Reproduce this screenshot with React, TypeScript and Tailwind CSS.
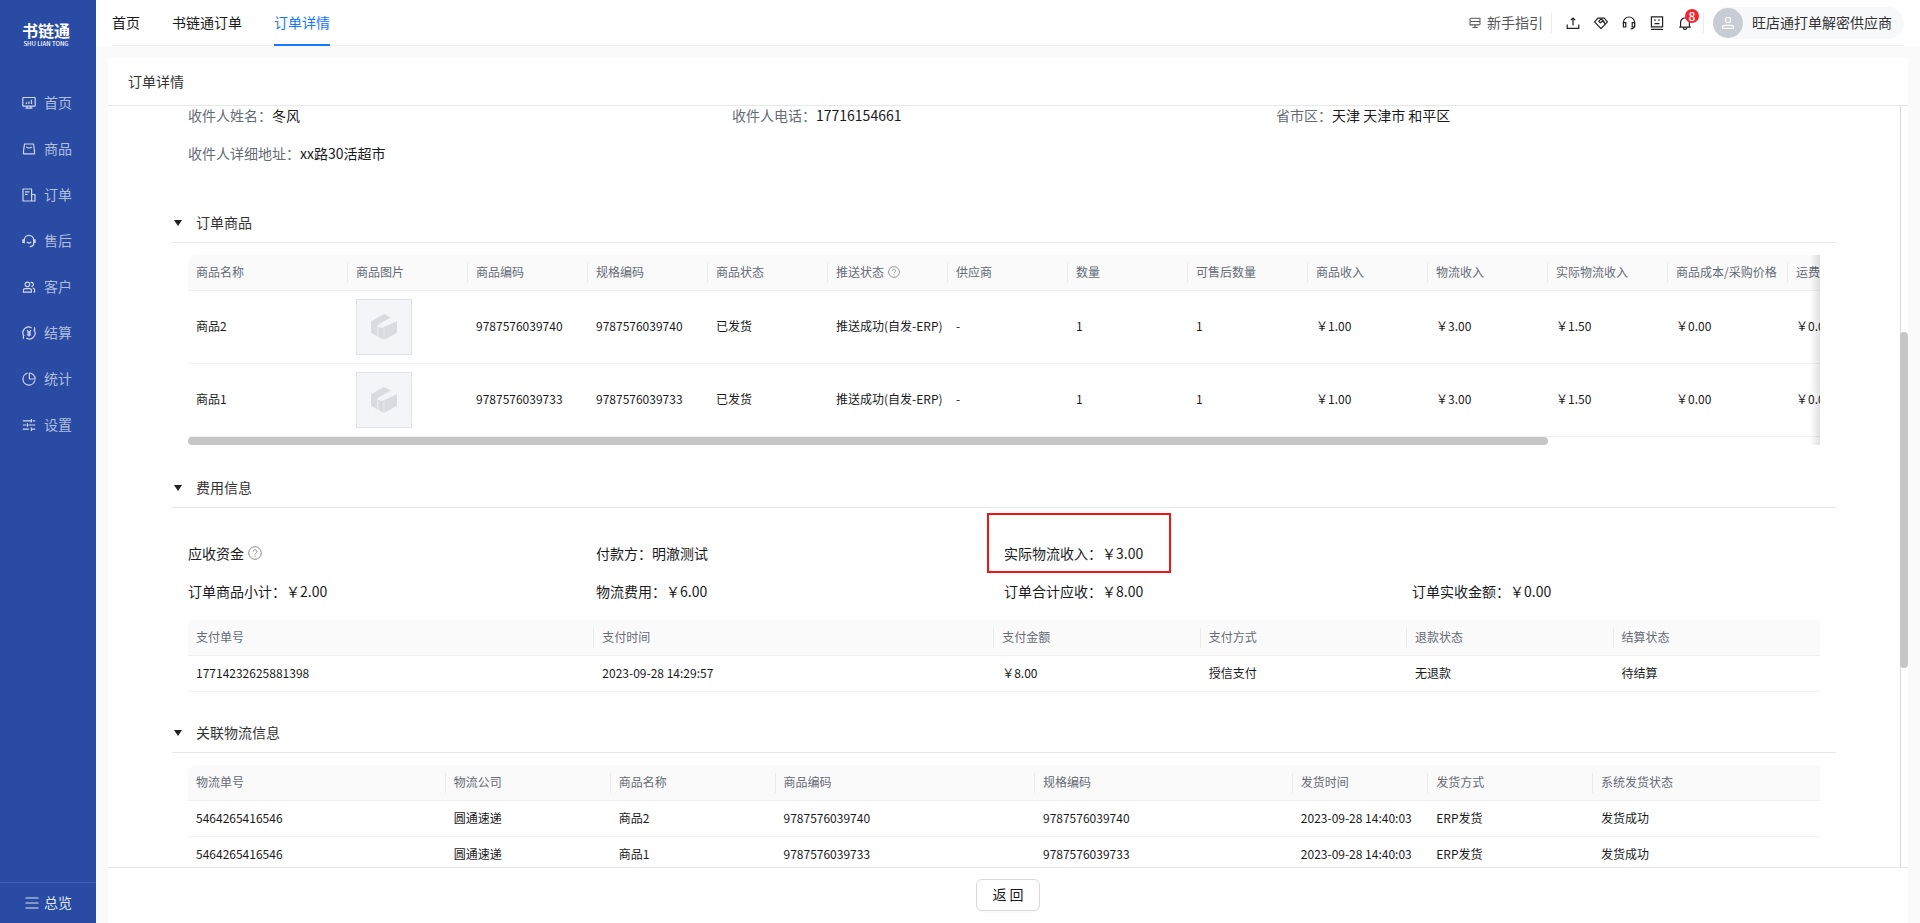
import type { ReactNode } from "react";

const strokeProps = {
  viewBox: "0 0 14 14",
  fill: "none",
  stroke: "currentColor",
  strokeWidth: 1.2,
  "aria-hidden": true,
} as const;

function Icon({ children, className = "size-3.5" }: { children: ReactNode; className?: string }) {
  return (
    <svg {...strokeProps} className={`shrink-0 ${className}`}>
      {children}
    </svg>
  );
}

const navItems: { label: string; icon: ReactNode }[] = [
  {
    label: "首页",
    icon: (
      <Icon>
        <rect x="0.8" y="1.5" width="12.4" height="8.6" rx="0.6" />
        <path d="M4.5 8V6.2M7 8V5.4M9.5 8V3.8M5 10v2M9 10v2M3.5 12.2h7" />
      </Icon>
    ),
  },
  {
    label: "商品",
    icon: (
      <Icon>
        <path d="M2.5 2h9l1 7v2.8h-11V9z" strokeLinejoin="round" />
        <path d="M4.4 4.8c.8 1.6 4.4 1.6 5.2 0" />
      </Icon>
    ),
  },
  {
    label: "订单",
    icon: (
      <Icon>
        <path d="M1 1h8.6v12H1z M9.6 6.5H13V13H9.6" strokeLinejoin="round" />
        <path d="M3 3.8h4.4M3 6.3h2.6" />
      </Icon>
    ),
  },
  {
    label: "售后",
    icon: (
      <Icon>
        <path d="M2.3 9.2V6a4.7 4.7 0 0 1 9.4 0v3.2c0 2-1.6 3.3-4 3.5" />
        <path d="M1.2 5.3v3.6M12.8 5.3v3.6" strokeWidth="1.8" />
        <path d="M4.9 7.9c.8 1.5 3.4 1.5 4.2 0" />
      </Icon>
    ),
  },
  {
    label: "客户",
    icon: (
      <Icon>
        <circle cx="5.4" cy="4.4" r="2.3" />
        <path d="M1.4 12.2v-1.8c0-1.1.8-1.8 1.8-1.8h4.4c1 0 1.8.7 1.8 1.8v1.8z" />
        <path d="M8.6 2.6a2 2 0 1 1 .8 3.8M10.4 8c1.4 0 2.2.9 2.2 2v2h-1.4" />
      </Icon>
    ),
  },
  {
    label: "结算",
    icon: (
      <Icon>
        <path d="M2.2 10.2A5.6 5.6 0 0 1 9.6 2M11.8 3.8A5.6 5.6 0 0 1 4.4 12" />
        <path d="M12.6 1.2v3.2M1.4 12.8V9.6" />
        <path d="M5 4.2 7 6.6l2-2.4M7 6.6v4M4.9 7h4.2M4.9 8.8h4.2" />
      </Icon>
    ),
  },
  {
    label: "统计",
    icon: (
      <Icon>
        <path d="M5.6 1.2a6 6 0 1 0 7.2 7.2" />
        <path d="M7.4 1v6h5.8A6 6 0 0 0 7.4 1z" strokeLinejoin="round" />
      </Icon>
    ),
  },
  {
    label: "设置",
    icon: (
      <Icon>
        <path d="M.8 2.8h8M10.8 2.8h2.4M9.4 1v3.6M.8 7h3.4M6.4 7h6.8M5.4 5.2v3.6M.8 11.2h6M9 11.2h4.2M9.4 9.4V13" />
      </Icon>
    ),
  },
];

function Sidebar() {
  return (
    <aside className="flex w-24 shrink-0 flex-col bg-[#294ba3]">
      <div className="flex flex-col items-center pt-5 pr-1 text-white">
        <div className="text-base leading-5 font-bold">书链通</div>
        <div className="text-[6px] leading-2 font-medium">SHU LIAN TONG</div>
      </div>
      <nav className="mt-8 flex flex-1 flex-col">
        {navItems.map((item) => (
          <a
            key={item.label}
            href="#"
            className="flex h-[46px] items-center gap-2 pl-[22px] text-sm text-[#d0d8eb]"
          >
            {item.icon}
            <span className="pb-0.5 text-[#b0bddd]">{item.label}</span>
          </a>
        ))}
      </nav>
      <button
        type="button"
        className="flex h-[41px] items-center gap-[5px] border-t border-[#4361af] pl-[25px] text-sm text-[#dfe4f1]"
      >
        <Icon>
          <path d="M.5 2h13M.5 7h13M.5 12h13" />
        </Icon>
        <span className="pb-0.5">总览</span>
      </button>
    </aside>
  );
}

const toolIcons: { label: string; icon: ReactNode }[] = [
  {
    label: "导出",
    icon: (
      <Icon>
        <path d="M1.2 8.6v3.8h11.6V8.6" />
        <path d="M7 9.6V2.2M4.8 4.2 7 2l2.2 2.2" />
      </Icon>
    ),
  },
  {
    label: "合作",
    icon: (
      <Icon>
        <path d="M7 12.6.6 5.8 3.8 2.2h6.4l3.2 3.6z" strokeLinejoin="round" />
        <path d="M7.2 2.6 4.8 5.4l1.6 1.4L8.6 5l3 3M6.8 2.8l3.6 3" />
      </Icon>
    ),
  },
  {
    label: "客服",
    icon: (
      <Icon>
        <path d="M1.4 7.2V6.6a5.6 5.6 0 0 1 11.2 0v3c0 1.8-1.2 3.2-4 3.4" />
        <path d="M1.4 6.6h2.4V11H1.4zM10.2 6.6h2.4V11h-2.4z" />
      </Icon>
    ),
  },
  {
    label: "反馈",
    icon: (
      <Icon>
        <path d="M1.4.8h11.2v10H1.4zM1 13.3h12" />
        <path d="M4.2 4.2h1.6M8.2 4.2h1.6M4.6 7.6h4.8" />
      </Icon>
    ),
  },
];

function Header() {
  return (
    <header className="flex bg-white px-4 leading-5">
      <div className="flex h-[46px] flex-1 items-center justify-between border-b border-[#f0f0f0]">
        <nav className="flex gap-8 self-stretch text-sm leading-5">
          <a href="#" className="pt-3">首页</a>
          <a href="#" className="pt-3">书链通订单</a>
          <a href="#" className="-mb-px border-b-2 border-[#1677ff] pt-3 text-[#1677ff]">
            订单详情
          </a>
        </nav>
        <div className="flex items-center text-sm">
          <a href="#" className="flex items-center gap-1.5 text-[#555]">
            <Icon className="size-3">
              <path d="M2.8 1.4h10v3.8h-10A1.9 1.9 0 0 1 2.8 1.4zM11.2 5.2c2.4 0 2.4 4 0 4H1.2v-4M4 12.2h6M7 9.2v3" />
            </Icon>
            <span className="pb-0.5">新手指引</span>
          </a>
          <span className="ml-2 h-5 w-px bg-[#ebebeb]" />
          <div className="flex items-center gap-3.5 pr-[11px] pl-3.5 text-[#222]">
            {toolIcons.map((tool) => (
              <button key={tool.label} type="button" aria-label={tool.label} className="flex">
                {tool.icon}
              </button>
            ))}
            <button type="button" aria-label="消息" className="relative flex">
              <Icon>
                <path d="M1.2 11.2h11.6M2.6 11.2V6.4a4.4 4.4 0 0 1 8.8 0v4.8M5.2 11.8c.3 2 3.3 2 3.6 0" />
              </Icon>
              <span className="absolute -top-[7px] left-[7px] flex size-3.5 items-center justify-center rounded-full bg-[#f5222d] text-xs leading-none font-medium text-white">
                8
              </span>
            </button>
          </div>
          <span className="h-5 w-px bg-[#ebebeb]" />
          <button
            type="button"
            className="ml-[9px] flex h-8 items-center gap-[9px] rounded-full bg-[#f7f8fa] pr-3 text-[#333]"
          >
            <span className="flex size-[30px] items-center justify-center rounded-full bg-[#c8ccd4] text-white">
              <Icon>
                <circle cx="7" cy="4" r="2.6" />
                <path d="M1.4 12.4v-1c0-1.2.8-2 2-2h7.2c1.2 0 2 .8 2 2v1z" />
              </Icon>
            </span>
            <span className="pb-0.5">旺店通打单解密供应商</span>
          </button>
        </div>
      </div>
    </header>
  );
}

function Help({ className }: { className: string }) {
  return (
    <svg viewBox="0 0 14 14" fill="none" stroke="#888" className={className} aria-hidden>
      <circle cx="7" cy="7" r="6.3" />
      <path d="M5.1 5.6c0-2.5 3.8-2.4 3.8 0 0 1.4-1.9 1.4-1.9 2.9M7 9.6v1.2" />
    </svg>
  );
}

function Section({ title, className, children }: { title: string; className: string; children: ReactNode }) {
  return (
    <section className={className}>
      <h2 className="border-b border-[#e8e8ec]">
        <button type="button" className="flex h-[38px] items-center gap-3.5 pl-0.5 text-sm text-[#333]">
          <svg viewBox="0 0 8 6" className="h-1.5 w-2" aria-hidden>
            <path d="M0 0h8L4 6z" fill="#222" />
          </svg>
          <span className="pb-0.5">{title}</span>
        </button>
      </h2>
      <div className="px-4">{children}</div>
    </section>
  );
}

type Column = { label: ReactNode; width: string };

function DataTable({ columns, rows, rowHeight, className }: {
  columns: Column[];
  rows: ReactNode[][];
  rowHeight: string;
  className: string;
}) {
  return (
    <table className={`table-fixed border-separate border-spacing-0 text-left text-xs ${className}`}>
      <thead>
        <tr className="h-9">
          {columns.map((col, i) => (
            <th
              key={i}
              className={`border-b border-[#f0f0f0] bg-[#fafafa] p-0 font-normal text-[#666b75] first:rounded-tl-lg ${col.width}`}
            >
              <div className="flex items-center justify-between pl-2 whitespace-nowrap">
                <span className="flex items-center gap-1 pb-0.5">{col.label}</span>
                {i < columns.length - 1 && <span className="h-5 w-px bg-[#ebebeb]" />}
              </div>
            </th>
          ))}
        </tr>
      </thead>
      <tbody>
        {rows.map((row, r) => (
          <tr key={r} className={rowHeight}>
            {row.map((cell, c) => (
              <td key={c} className="border-b border-[#f0f0f0] p-0 pl-2 whitespace-nowrap">
                {typeof cell === "string" ? <div className="pb-0.5">{cell}</div> : cell}
              </td>
            ))}
          </tr>
        ))}
      </tbody>
    </table>
  );
}

function Placeholder() {
  return (
    <div className="flex size-14 items-center justify-center border border-[#e0e2e7] bg-[#f4f5f8]">
      <svg viewBox="0 0 26 26" className="size-[26px]" aria-hidden>
        <path d="M13 0 19.5 3.6 8 10.2c-1.2.8-1.6 1.6-1.5 3v9.2L0 18.8V7.2z" fill="#d9dbe1" />
        <path d="M7.2 12.6c2 1.6 3.8 1.6 6 .4L26 7.2v11.6L13 26l-5.8-3.2z" fill="#d9dbe1" />
        <path d="M13 14v12M6.8 12v10.6" stroke="#eceef2" strokeWidth="0.8" />
      </svg>
    </div>
  );
}

const productColumns: Column[] = [
  { label: "商品名称", width: "w-40" },
  { label: "商品图片", width: "w-30" },
  { label: "商品编码", width: "w-30" },
  { label: "规格编码", width: "w-30" },
  { label: "商品状态", width: "w-30" },
  { label: <>推送状态<Help className="size-3" /></>, width: "w-30" },
  { label: "供应商", width: "w-30" },
  { label: "数量", width: "w-30" },
  { label: "可售后数量", width: "w-30" },
  { label: "商品收入", width: "w-30" },
  { label: "物流收入", width: "w-30" },
  { label: "实际物流收入", width: "w-30" },
  { label: "商品成本/采购价格", width: "w-30" },
  { label: "运费", width: "w-30" },
];

const productRow = (name: string, code: string): ReactNode[] => [
  name, <Placeholder />, code, code, "已发货", "推送成功(自发-ERP)", "-", "1", "1",
  "￥1.00", "￥3.00", "￥1.50", "￥0.00", "￥0.00",
];

const paymentColumns: Column[] = [
  { label: "支付单号", width: "w-[24.9%]" },
  { label: "支付时间", width: "w-[24.5%]" },
  { label: "支付金额", width: "w-auto" },
  { label: "支付方式", width: "w-auto" },
  { label: "退款状态", width: "w-auto" },
  { label: "结算状态", width: "w-auto" },
];

const shippingColumns: Column[] = [
  { label: "物流单号", width: "w-[15.8%]" },
  { label: "物流公司", width: "w-[10.1%]" },
  { label: "商品名称", width: "w-[10.1%]" },
  { label: "商品编码", width: "w-[15.9%]" },
  { label: "规格编码", width: "w-[15.8%]" },
  { label: "发货时间", width: "w-[8.3%]" },
  { label: "发货方式", width: "w-[10.1%]" },
  { label: "系统发货状态", width: "w-auto" },
];

const shippingRow = (name: string, code: string): ReactNode[] => [
  "5464265416546", "圆通速递", name, code, code, "2023-09-28 14:40:03", "ERP发货", "发货成功",
];

function Field({ label, value }: { label: string; value: string }) {
  return (
    <div>
      <span className="text-[#666b75]">{label}：</span>
      {value}
    </div>
  );
}

export default function App() {
  return (
    <div className="flex h-screen bg-[#fafafa] font-['Noto_Sans_CJK_SC','Liberation_Sans',sans-serif] text-[#1a1a1a]">
      <Sidebar />
      <div className="flex min-w-0 flex-1 flex-col">
        <Header />
        <main className="mx-3 mt-3 flex min-h-0 flex-1 flex-col bg-white">
          <h1 className="flex h-12 shrink-0 items-center border-b border-[#e8e8e8] pb-0.5 pl-5 text-sm text-[#333]">
            订单详情
          </h1>
          <div className="flex min-h-0 flex-1">
            <div className="min-w-0 flex-1 overflow-hidden px-16">
              <div className="grid grid-cols-3 gap-y-5 px-4 text-sm leading-[18px]">
                <Field label="收件人姓名" value="冬风" />
                <Field label="收件人电话" value="17716154661" />
                <Field label="省市区" value="天津 天津市 和平区" />
                <Field label="收件人详细地址" value="xx路30活超市" />
              </div>

              <Section title="订单商品" className="mt-[42px]">
                <div className="relative mt-3 overflow-hidden">
                  <DataTable
                    columns={productColumns}
                    rows={[productRow("商品2", "9787576039740"), productRow("商品1", "9787576039733")]}
                    rowHeight="h-[73px]"
                    className="w-[1720px]"
                  />
                  <div className="h-2">
                    <div className="h-full w-5/6 rounded-full bg-[#c6c6c6]" />
                  </div>
                  <div className="absolute inset-y-0 right-0 w-2.5 bg-linear-to-r from-transparent to-black/12" />
                </div>
              </Section>

              <Section title="费用信息" className="mt-6">
                <div className="mt-9 grid grid-cols-4 gap-y-5 text-sm leading-[18px]">
                  <div className="flex items-center gap-1">
                    应收资金
                    <Help className="size-3.5" />
                  </div>
                  <div>付款方：明澈测试</div>
                  <div className="relative">
                    实际物流收入：￥3.00
                    <div className="pointer-events-none absolute -top-[31px] -left-[17px] h-[60px] w-[184px] border-2 border-[#f51414]" />
                  </div>
                  <div />
                  <div>订单商品小计：￥2.00</div>
                  <div>物流费用：￥6.00</div>
                  <div>订单合计应收：￥8.00</div>
                  <div>订单实收金额：￥0.00</div>
                </div>
                <DataTable
                  columns={paymentColumns}
                  rows={[["17714232625881398", "2023-09-28 14:29:57", "￥8.00", "授信支付", "无退款", "待结算"]]}
                  rowHeight="h-9"
                  className="mt-5 w-full"
                />
              </Section>

              <Section title="关联物流信息" className="mt-[22px]">
                <DataTable
                  columns={shippingColumns}
                  rows={[shippingRow("商品2", "9787576039740"), shippingRow("商品1", "9787576039733")]}
                  rowHeight="h-9"
                  className="mt-3 w-full"
                />
              </Section>
            </div>
            <div className="flex w-2 flex-col border-l border-[#d9d9d9]">
              <div className="flex-[226]" />
              <div className="-ml-px flex-[337] rounded-full bg-[#c6c6c6]" />
              <div className="flex-[199]" />
            </div>
          </div>
          <footer className="flex h-14 shrink-0 justify-center border-t border-[#e8e8e8] pt-[11px]">
            <button
              type="button"
              className="h-8 w-16 rounded-md border border-[#d9d9d9] bg-white pb-0.5 text-sm shadow-[0_2px_0_rgba(0,0,0,0.02)]"
            >
              返 回
            </button>
          </footer>
        </main>
      </div>
    </div>
  );
}
